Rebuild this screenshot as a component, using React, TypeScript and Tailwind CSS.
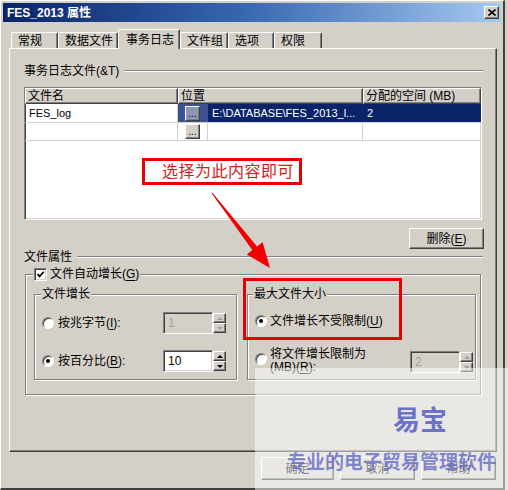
import React from 'react';

const RAISED =
  'border border-t-white border-l-white border-r-[#404040] border-b-[#404040] shadow-[inset_-1px_-1px_0_#808080] bg-[#d4d0c8]';
const SUNKEN =
  'border border-t-[#808080] border-l-[#808080] border-r-white border-b-white shadow-[inset_1px_1px_0_#404040,inset_-1px_-1px_0_#d4d0c8]';
const GROUP = 'border border-[#808080] shadow-[inset_1px_1px_0_#ffffff,1px_1px_0_#ffffff]';
const ETCH = 'h-[2px] border-t border-t-[#808080] border-b border-b-white';

const U = ({ children }: { children: React.ReactNode }) => (
  <span className="underline underline-offset-2">{children}</span>
);

const Radio = ({ checked = false }: { checked?: boolean }) => (
  <span className="flex h-[12px] w-[12px] shrink-0 items-center justify-center rounded-full border border-t-[#808080] border-l-[#808080] border-r-white border-b-white bg-white shadow-[inset_1px_1px_0_#404040]">
    {checked && <span className="h-[4px] w-[4px] rounded-full bg-black" />}
  </span>
);

const Check = () => (
  <span className={`flex h-[13px] w-[13px] shrink-0 items-center justify-center bg-white ${SUNKEN}`}>
    <svg width="9" height="9" viewBox="0 0 9 9">
      <path d="M1.5 4.2 L3.6 6.4 L7.8 1.8" stroke="black" strokeWidth="1.7" fill="none" />
    </svg>
  </span>
);

const SpinArrow = ({ up = false, disabled = false }: { up?: boolean; disabled?: boolean }) => (
  <div className={`flex flex-1 items-center justify-center ${RAISED}`}>
    {up ? (
      <span
        className={`h-0 w-0 border-x-[3px] border-x-transparent border-b-[3px] ${
          disabled ? 'border-b-[#a0a0a0]' : 'border-b-black'
        }`}
      />
    ) : (
      <span
        className={`h-0 w-0 border-x-[3px] border-x-transparent border-t-[3px] ${
          disabled ? 'border-t-[#a0a0a0]' : 'border-t-black'
        }`}
      />
    )}
  </div>
);

const Spin = ({ value, disabled = false }: { value: string; disabled?: boolean }) => (
  <div className="flex h-[22px]">
    <div
      className={`flex w-[50px] items-center pl-[4px] ${SUNKEN} ${
        disabled ? 'bg-[#d4d0c8] text-[#a0a0a0]' : 'bg-white text-black'
      }`}
    >
      {value}
    </div>
    <div className="flex w-[13px] flex-col py-[1px]">
      <SpinArrow up disabled={disabled} />
      <SpinArrow disabled={disabled} />
    </div>
  </div>
);

const Dots = ({ active = false }: { active?: boolean }) => (
  <div
    className={`flex h-[15px] w-[15px] items-end justify-center pb-[1px] text-[10px] leading-none border border-t-white border-l-white border-r-[#404040] border-b-[#404040] shadow-[inset_-1px_-1px_0_#808080] ${
      active ? 'bg-[#8d96b8]' : 'bg-[#d4d0c8]'
    }`}
  >
    ...
  </div>
);

const tabs = [
  { label: '常规', w: 'w-[47px]' },
  { label: '数据文件', w: 'w-[60px]' },
  { label: '事务日志', w: 'w-[62px]', active: true },
  { label: '文件组', w: 'w-[48px]' },
  { label: '选项', w: 'w-[46px]' },
  { label: '权限', w: 'w-[48px]' },
];

export default function App() {
  return (
    <div className="relative h-[490px] w-[508px] overflow-hidden bg-[#d4d0c8] font-['Liberation_Sans','Noto_Sans_CJK_SC',sans-serif] text-[12px] leading-none text-black">
      <div className="flex h-[490px] w-[505px] flex-col border-l border-t border-l-white border-t-white border-r-2 border-b-2 border-r-[#404040] border-b-[#404040]">
        {/* title bar */}
        <div className="mx-[2px] mt-[2px] flex h-[19px] items-center justify-between bg-linear-to-r from-[#0a246a] via-[#3a6ab0] to-[#a6caf0] pl-[4px] pr-[2px]">
          <span className="text-[12px] font-bold text-white">FES_2013 属性</span>
          <div className={`flex h-[13px] w-[15px] items-center justify-center ${RAISED}`}>
            <svg width="8" height="7" viewBox="0 0 8 7">
              <path d="M0.5 0.5 L7.5 6.5 M7.5 0.5 L0.5 6.5" stroke="black" strokeWidth="1.6" />
            </svg>
          </div>
        </div>

        {/* tabs */}
        <div className="relative z-10 mt-[7px] flex h-[19px] items-end pl-[10px]">
          {tabs.map((t) => (
            <div
              key={t.label}
              className={`flex items-center rounded-t-[2px] border-t border-l border-r border-t-white border-l-white border-r-[#404040] bg-[#d4d0c8] pl-[6px] shadow-[inset_-1px_0_0_#808080] ${
                t.w
              } ${t.active ? '-mb-px h-[20px] pl-[7px]' : 'h-[16px]'}`}
            >
              {t.label}
            </div>
          ))}
        </div>

        {/* tab panel */}
        <div className="ml-[8px] flex h-[404px] w-[488px] flex-col border-l border-t border-l-white border-t-white border-r border-b border-r-[#404040] border-b-[#404040] shadow-[inset_-1px_-1px_0_#808080]">
          <div className="ml-[14px] mr-[13px] mt-[15px] flex h-[14px] items-center">
            <span>事务日志文件(&amp;T)</span>
            <div className={`ml-[5px] flex-1 ${ETCH}`} />
          </div>

          {/* file grid */}
          <div className={`ml-[14px] mt-[9px] h-[133px] w-[458px] bg-white ${SUNKEN}`}>
            <div className="flex h-[16px]">
              <div className={`flex w-[153px] items-center pl-[2px] ${RAISED}`}>文件名</div>
              <div className={`flex w-[185px] items-center pl-[2px] ${RAISED}`}>位置</div>
              <div className={`flex flex-1 items-center pl-[2px] ${RAISED}`}>分配的空间 (MB)</div>
            </div>
            <div className="flex h-[19px] border-b border-b-[#d0d0d0] text-[11px]">
              <div className="flex w-[153px] items-center border-r border-r-[#d0d0d0] pl-[4px]">FES_log</div>
              <div className="flex w-[30px] items-center bg-[#3b5190] pl-[7px]">
                <Dots active />
              </div>
              <div className="flex w-[155px] items-center overflow-hidden whitespace-nowrap bg-[#0a246a] pl-[4px] text-white">
                {'E:\\DATABASE\\FES_2013_l...'}
              </div>
              <div className="flex flex-1 items-center bg-[#0a246a] pl-[4px] text-white">2</div>
            </div>
            <div className="flex h-[18px] border-b border-b-[#d0d0d0]">
              <div className="w-[153px] border-r border-r-[#d0d0d0]" />
              <div className="flex w-[30px] items-center border-r border-r-[#d0d0d0] pl-[7px]">
                <Dots />
              </div>
              <div className="w-[155px] border-r border-r-[#d0d0d0]" />
              <div className="flex-1" />
            </div>
          </div>

          <div className="mt-[8px] flex justify-end pr-[12px]">
            <div className={`flex h-[21px] w-[75px] items-center justify-center ${RAISED}`}>
              删除(<U>E</U>)
            </div>
          </div>

          <div className="ml-[14px] mr-[13px] mt-[1px] flex h-[14px] items-center">
            <span>文件属性</span>
            <div className={`ml-[5px] flex-1 ${ETCH}`} />
          </div>

          {/* auto grow group */}
          <div className={`ml-[15px] mt-[10px] h-[121px] w-[456px] ${GROUP}`}>
            <div className="-mt-[8px] ml-[7px] flex h-[14px] w-fit items-center gap-[3px] bg-[#d4d0c8] px-[1px]">
              <Check />
              <span>
                文件自动增长(<U>G</U>)
              </span>
            </div>
            <div className="mt-[13px] flex gap-[10px] pl-[8px]">
              <div className={`h-[86px] w-[203px] ${GROUP}`}>
                <div className="-mt-[8px] ml-[6px] flex h-[14px] w-fit items-center bg-[#d4d0c8] px-[1px]">
                  文件增长
                </div>
                <div className="mt-[11px] flex h-[22px] items-center pl-[7px]">
                  <Radio />
                  <span className="ml-[4px] w-[105px]">
                    按兆字节(<U>I</U>):
                  </span>
                  <Spin value="1" disabled />
                </div>
                <div className="mt-[16px] flex h-[22px] items-center pl-[7px]">
                  <Radio checked />
                  <span className="ml-[4px] w-[105px]">
                    按百分比(<U>B</U>):
                  </span>
                  <Spin value="10" />
                </div>
              </div>

              <div className={`h-[86px] w-[229px] ${GROUP}`}>
                <div className="-mt-[8px] ml-[5px] flex h-[14px] w-fit items-center bg-[#d4d0c8] px-[1px]">
                  最大文件大小
                </div>
                <div className="mt-[12px] flex h-[16px] items-center pl-[7px]">
                  <Radio checked />
                  <span className="ml-[3px]">
                    文件增长不受限制(<U>U</U>)
                  </span>
                </div>
                <div className="mt-[19px] flex h-[26px] items-start pl-[7px] pr-[2px]">
                  <div className="mt-[5px]">
                    <Radio />
                  </div>
                  <span className="ml-[3px] leading-[13px]">
                    将文件增长限制为
                    <br />
                    (MB)(<U>R</U>):
                  </span>
                  <div className="ml-auto mt-[3px]">
                    <Spin value="2" disabled />
                  </div>
                </div>
              </div>
            </div>
          </div>
        </div>

        {/* dialog buttons */}
        <div className="mt-[5px] flex justify-end gap-[6px] pr-[7px]">
          <div className={`flex h-[23px] w-[73px] items-center justify-center ${RAISED}`}>确定</div>
          <div className={`flex h-[23px] w-[75px] items-center justify-center ${RAISED}`}>取消</div>
          <div className={`flex h-[23px] w-[75px] items-center justify-center ${RAISED}`}>帮助</div>
        </div>
      </div>

      {/* annotations */}
      <div className="pointer-events-none absolute left-[142px] top-[158px] flex h-[27px] w-[160px] items-center border-[3px] border-[#e40000] bg-white pl-[17px] text-[16px] tracking-[0.5px] text-[#d41a1a]">
        选择为此内容即可
      </div>
      <div className="pointer-events-none absolute left-[243px] top-[278px] h-[62px] w-[159px] border-[3px] border-[#e40000]" />
      <svg className="pointer-events-none absolute left-0 top-0" width="508" height="490" viewBox="0 0 508 490">
        <polygon
          points="211.6,193.3 252.3,250.1 246.8,254.4 270,268 262.6,242.2 257.1,246.5 212.4,192.7"
          fill="#f00000"
        />
      </svg>

      {/* watermark */}
      <div className="pointer-events-none absolute bottom-0 left-[255px] right-0 top-[368px] bg-white/50" />
      <div className="pointer-events-none absolute left-[393px] top-[408px] whitespace-nowrap text-[27px] font-bold leading-none text-[#6b73c6]">
        易宝
      </div>
      <div className="pointer-events-none absolute left-[287px] top-[453px] whitespace-nowrap text-[19px] font-bold leading-none text-[#5a63c4]/75">
        专业的电子贸易管理软件
      </div>
    </div>
  );
}
